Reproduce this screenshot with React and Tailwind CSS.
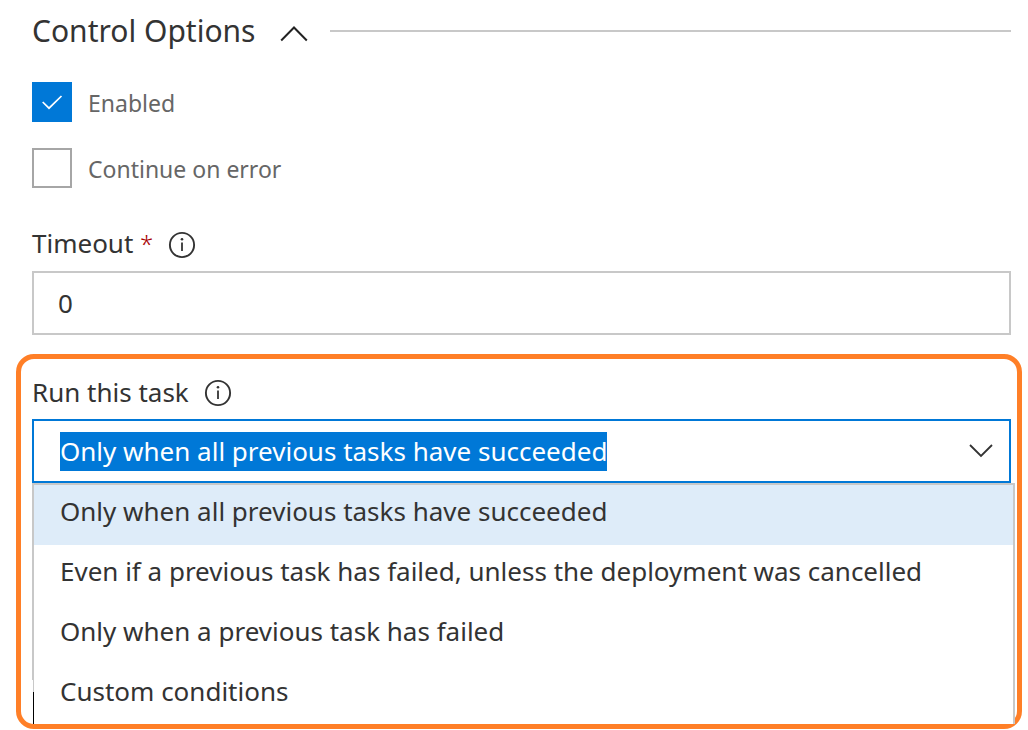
import { useEffect, useRef, useState } from "react";

const OPTIONS = [
  "Only when all previous tasks have succeeded",
  "Even if a previous task has failed, unless the deployment was cancelled",
  "Only when a previous task has failed",
  "Custom conditions",
];

function InfoButton({ label }) {
  return (
    <button type="button" aria-label={label} className="text-[#333]">
      <svg width="28" height="28" viewBox="0 0 28 28" fill="none" aria-hidden="true">
        <circle cx="14" cy="14" r="12.1" stroke="currentColor" strokeWidth="1.9" />
        <rect x="13.1" y="11.5" width="1.8" height="8.5" fill="currentColor" />
        <circle cx="14" cy="8.3" r="1.3" fill="currentColor" />
      </svg>
    </button>
  );
}

function Checkbox({ id, label, defaultChecked }) {
  return (
    <div className="flex items-center gap-4">
      <div className="grid size-10">
        <input
          id={id}
          type="checkbox"
          defaultChecked={defaultChecked}
          className="peer col-start-1 row-start-1 size-10 appearance-none border-2 border-[#a6a6a6] bg-white checked:border-[#0078d7] checked:bg-[#0078d7]"
        />
        <svg
          viewBox="0 0 40 40"
          fill="none"
          aria-hidden="true"
          className="pointer-events-none invisible col-start-1 row-start-1 size-10 peer-checked:visible"
        >
          <path d="M10.7 20L17 26.2L29.5 14" stroke="white" strokeWidth="1.7" />
        </svg>
      </div>
      <label htmlFor={id} className="pt-[2px] text-[23px] leading-8 text-[#666]">
        {label}
      </label>
    </div>
  );
}

export default function App() {
  const [value, setValue] = useState(OPTIONS[0]);
  const [expanded, setExpanded] = useState(true);
  const comboRef = useRef(null);

  useEffect(() => {
    comboRef.current?.focus();
    comboRef.current?.select();
  }, []);

  return (
    <main className="bg-white pt-2 pr-[6px] pl-4 font-['Noto_Sans','Open_Sans',sans-serif] text-[26px] text-[#333]">
      <header className="flex items-center pr-[11px] pl-4">
        <h2 className="text-[30px] leading-[46px]">Control Options</h2>
        <button
          type="button"
          aria-label="Toggle control options"
          aria-expanded={expanded}
          onClick={() => setExpanded(!expanded)}
          className="mr-5 ml-[23px]"
        >
          <svg width="32" height="24" viewBox="0 0 32 24" fill="none" aria-hidden="true">
            <path d="M3.2 21.5L16 8.5L28.8 21.5" stroke="#222" strokeWidth="2" />
          </svg>
        </button>
        <div className="h-[2px] flex-1 bg-[#c8c8c8]" />
      </header>

      <div className="mt-7 flex flex-col gap-[26px] pl-4">
        <Checkbox id="enabled" label="Enabled" defaultChecked />
        <Checkbox id="continue" label="Continue on error" />
      </div>

      <div className="mt-[38px] pr-[11px] pl-4">
        <div className="flex items-center gap-[15px]">
          <label htmlFor="timeout" className="pb-[2px] leading-[34px]">
            Timeout <span className="text-[24px] font-light text-[#a80000]">*</span>
          </label>
          <InfoButton label="About timeout" />
        </div>
        <input
          id="timeout"
          type="text"
          defaultValue="0"
          className="mt-2 block h-16 w-full border-2 border-[#c8c8c8] bg-white px-6 outline-none"
        />
      </div>

      <section className="mt-[19px] rounded-[18px] border-[5px] border-[#ff7f27] pt-4 pr-[2px] pl-[11px]">
        <div className="flex items-center gap-[15px]">
          <label htmlFor="run" className="pb-[2px] leading-[34px]">
            Run this task
          </label>
          <InfoButton label="About run conditions" />
        </div>
        <div className="mt-2 mr-1 flex h-16 items-center border-2 border-[#0078d7] bg-white pr-4 pl-[26px]">
          <input
            id="run"
            ref={comboRef}
            type="text"
            role="combobox"
            aria-expanded="true"
            aria-controls="run-options"
            value={value}
            onChange={(e) => setValue(e.target.value)}
            className="min-w-0 flex-1 bg-transparent outline-none selection:bg-[#0078d7] selection:text-white"
          />
          <button type="button" aria-label="Show options" aria-expanded="true">
            <svg width="24" height="24" viewBox="0 0 24 24" fill="none" aria-hidden="true">
              <path d="M1 6L12 17L23 6" stroke="#333" strokeWidth="1.8" />
            </svg>
          </button>
        </div>
        <div className="flex">
          <div className="flex w-[2px] flex-col items-end">
            <div className="w-[2px] flex-1 bg-[#c8c8c8]" />
            <div className="h-3 w-px bg-[#c8c8c8]" />
            <div className="h-8 w-px bg-black" />
          </div>
          <ul
            id="run-options"
            role="listbox"
            className="flex-1 border-t-2 border-r-2 border-[#c8c8c8] bg-white"
          >
            {OPTIONS.map((option, index) => (
              <li
                key={option}
                role="option"
                aria-selected={index === 0}
                onClick={() => setValue(option)}
                className="h-[60px] pt-2 pl-[26px] leading-9 last:h-[59px] aria-selected:bg-[#deecf9]"
              >
                {option}
              </li>
            ))}
          </ul>
        </div>
      </section>
    </main>
  );
}
